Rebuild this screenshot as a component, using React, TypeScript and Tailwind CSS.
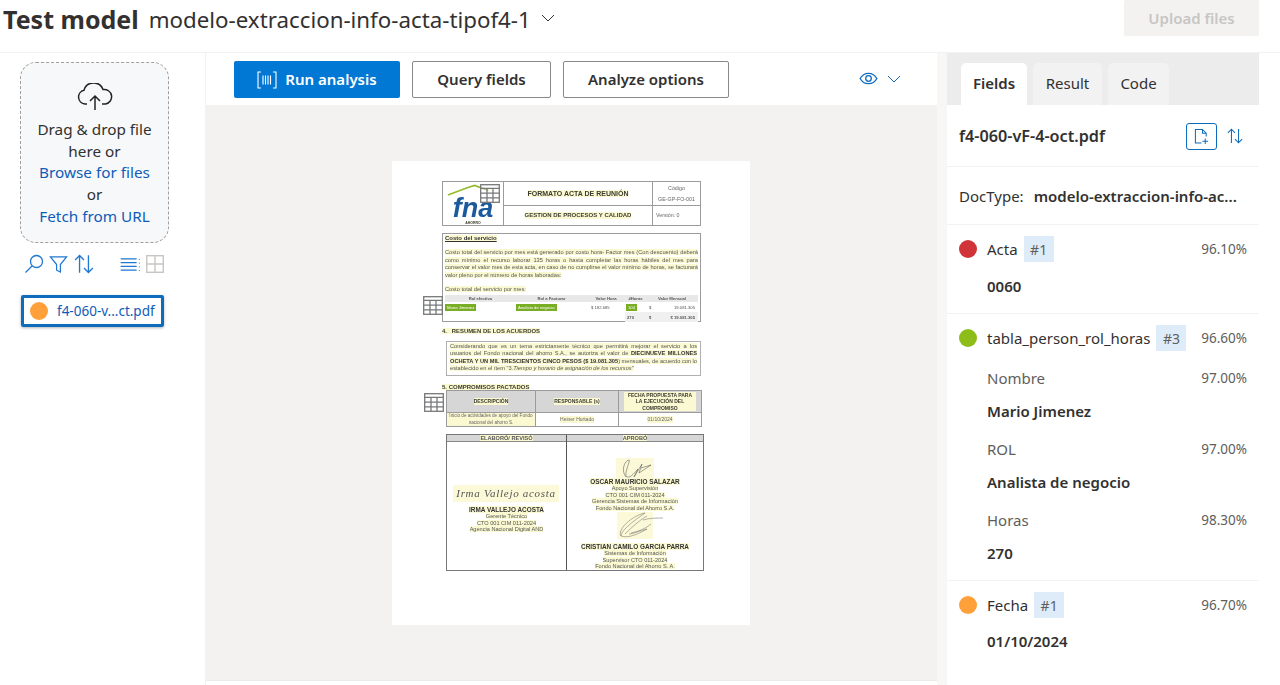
import React from "react";

const Dot = ({ c }: { c: string }) => <span className={`w-[18px] h-[18px] rounded-full shrink-0 ${c}`} />;

const Sort = ({ className = "" }: { className?: string }) => (
  <svg viewBox="0 0 18 18" className={className} fill="none" stroke="currentColor" strokeWidth="1.2">
    <path d="M5 16.8V1.4M1 5.4l4-4 4 4M13 1.2v15.4M9 12.6l4 4 4-4" />
  </svg>
);

const TableIcon = ({ className = "" }: { className?: string }) => (
  <svg viewBox="0 0 20 19" className={className} fill="#fff" fillOpacity="0.35" stroke="#77787a" strokeWidth="1.3">
    <rect x="0.7" y="0.7" width="18.6" height="17.6" />
    <path d="M0.7 4.4h18.6M0.7 9.2h18.6M0.7 13.9h18.6M7 4.4v13.9M13 4.4v13.9" />
  </svg>
);

const H = ({ children }: { children: React.ReactNode }) => <span className="bg-[#fbf9d2]">{children}</span>;

function Doc() {
  return (
    <div className="w-[358px] h-[464px] bg-white relative pl-[50px] pt-[20px] text-[#3b3b30] shrink-0 font-['Liberation_Sans',sans-serif] blur-[0.25px]">
      <div className="w-[259px] h-[45px] border border-[#9b9b9b] flex text-[6px] leading-[7px]">
        <div className="w-[61px] border-r border-[#9b9b9b] relative flex flex-col items-center justify-end">
          <svg viewBox="0 0 50 14" className="absolute left-[4px] top-[2px] w-[46px] h-[13px]" fill="none">
            <path d="M1 12 L22 4 L30 1.5 L45 7" stroke="#94bb2c" strokeWidth="1.8" />
          </svg>
          <span className="text-[#1c5a9e] text-[27px] leading-[25px] font-bold italic">fna</span>
          <span className="text-[3.5px] leading-[4px] font-bold">AHORRO</span>
        </div>
        <div className="w-[149px] border-r border-[#9b9b9b] flex flex-col font-bold">
          <div className="h-[24px] border-b border-[#9b9b9b] flex items-center justify-center text-[7px]"><H>FORMATO ACTA DE REUNIÓN</H></div>
          <div className="flex-1 flex items-center justify-center"><H>GESTION DE PROCESOS Y CALIDAD</H></div>
        </div>
        <div className="flex-1 flex flex-col text-[#666] text-[5.3px] pl-[3px]">
          <div className="h-[24px] border-b border-[#9b9b9b] -ml-[3px] flex flex-col items-center justify-center leading-[11px]"><span>Código</span><span>GE-GP-FO-001</span></div>
          <div className="flex-1 flex items-center">Versión: 0</div>
        </div>
      </div>

      <div className="mt-[7px] w-[259px] h-[89px] border border-[#9b9b9b] px-[2px] text-[#555] text-[5.7px] leading-[7.5px]">
        <div className="font-bold underline text-[6px] leading-[6px] text-[#333] mt-[1px] mb-[8px]"><H>Costo del servicio</H></div>
        <p className="text-justify"><H>Costo total del servicio por mes está generado por costo hora- Factor mes (Con descuento) deberá como mínimo el recurso laborar 135 horas o hasta completar las horas hábiles del mes para conservar el valor mes de esta acta, en caso de no cumplirse el valor mínimo de horas, se facturará valor pleno por el número de horas laboradas:</H></p>
        <div className="mt-[7px] mb-[3px] leading-[6px]"><H>Costo total del servicio por mes:</H></div>
        <div className="grid grid-cols-[71px_71px_38px_21px_52px] text-[4.2px] leading-[7px]">
          <div className="bg-[#e8e8e8] text-center font-bold">Rol efectivo</div>
          <div className="bg-[#e8e8e8] text-center font-bold">Rol a Facturar</div>
          <div className="bg-[#e8e8e8] text-center font-bold">Valor Hora</div>
          <div className="bg-[#e8e8e8] text-center font-bold">#Horas</div>
          <div className="bg-[#e8e8e8] text-center font-bold">Valor Mensual</div>
          <div className="h-[10px] flex items-center"><span className="bg-[#78ad24] text-white px-[2px] leading-[7px]">Mario Jimenez</span></div>
          <div className="h-[10px] flex items-center"><span className="bg-[#78ad24] text-white px-[2px] leading-[7px]">Analista de negocio</span></div>
          <div className="h-[10px] flex items-center pl-[4px]">$ 182.685</div>
          <div className="h-[10px] flex items-center pl-[1px]"><span className="bg-[#78ad24] text-white px-[2px] leading-[7px]">104</span></div>
          <div className="h-[10px] flex items-center justify-between px-[3px]"><span>$</span><span>19.081.305</span></div>
          <div className="col-span-3 h-[10px]" />
          <div className="h-[10px] bg-[#f0f0f0] flex items-center pl-[2px] font-bold">270</div>
          <div className="h-[10px] bg-[#f0f0f0] flex items-center justify-between px-[3px] font-bold"><span>$</span><span>$ 19.081.305</span></div>
        </div>
      </div>

      <div className="mt-[6px] text-[5.9px] leading-[6px] font-bold"><H>4.&nbsp;&nbsp;&nbsp;RESUMEN DE LOS ACUERDOS</H></div>
      <div className="ml-[4px] mt-[7px] w-[255px] h-[35px] border border-[#b0b0b0] px-[3px] pt-[1px] text-[5.65px] leading-[7.4px] text-[#555] text-justify">
        <H>Considerando que es un tema estrictamente técnico que permitirá mejorar el servicio a los usuarios del Fondo nacional del ahorro S.A., se autoriza el valor de <b className="text-[#333]">DIECINUEVE MILLONES OCHETA Y UN MIL TRESCIENTOS CINCO PESOS ($ 19.081.305</b>) mensuales, de acuerdo con lo establecido en el ítem "3.<i>Tiempo y horario de asignación de los recursos</i>"</H>
      </div>

      <div className="mt-[8px] text-[6px] leading-[6px] font-bold"><H>5.&nbsp;COMPROMISOS PACTADOS</H></div>
      <div className="ml-[4px] w-[256px] h-[37px] border border-[#9b9b9b] grid grid-cols-[89px_83px_1fr] grid-rows-[22px_1fr] text-[5px] leading-[6.5px] text-center">
        <div className="bg-[#d6d6d6] border-r border-b border-[#9b9b9b] flex items-center justify-center font-bold"><H>DESCRIPCIÓN</H></div>
        <div className="bg-[#d6d6d6] border-r border-b border-[#9b9b9b] flex items-center justify-center font-bold"><H>RESPONSABLE (s)</H></div>
        <div className="bg-[#d6d6d6] border-b border-[#9b9b9b] flex items-center justify-center font-bold px-[5px]"><H>FECHA PROPUESTA PARA LA EJECUCIÓN DEL COMPROMISO</H></div>
        <div className="border-r border-[#9b9b9b] flex items-center justify-center text-[#666] text-[4.6px]"><H>Inicio de actividades de apoyo del Fondo nacional del ahorro S.</H></div>
        <div className="border-r border-[#9b9b9b] flex items-center justify-center text-[#666]"><H>Heiner Hurtado</H></div>
        <div className="flex items-center justify-center text-[#666]"><H>01/10/2024</H></div>
      </div>

      <div className="ml-[4px] mt-[7px] w-[258px] h-[137px] border border-[#777] flex text-[5.6px] leading-[6.7px] text-center text-[#555]">
        <div className="w-[120px] border-r border-[#555] flex flex-col">
          <div className="h-[7px] bg-[#d6d6d6] border-b border-[#888] font-bold leading-[6px]"><H>ELABORÓ/ REVISÓ</H></div>
          <div className="mt-[43px] w-[106px] h-[17px] ml-[6px] bg-[#fbf9d8] text-[11px] leading-[17px] italic font-['Liberation_Serif',serif] tracking-[0.7px] whitespace-nowrap overflow-hidden">Irma Vallejo acosta</div>
          <div className="mt-[4px] text-[6.4px] leading-[7px] font-bold text-[#333]"><H>IRMA VALLEJO ACOSTA</H></div>
          <div><H>Gerente Técnico</H></div>
          <div><H>CTO 001 CIM 011-2024</H></div>
          <div><H>Agencia Nacional Digital AND</H></div>
        </div>
        <div className="flex-1 flex flex-col items-center">
          <div className="h-[7px] w-full bg-[#d6d6d6] border-b border-[#888] font-bold leading-[6px]"><H>APROBÓ</H></div>
          <svg viewBox="0 0 38 20" className="w-[38px] h-[20px] mt-[16px] bg-[#fbf9d8] shrink-0" fill="none" stroke="#444" strokeWidth="0.5">
            <path d="M10 19C5 13 8 3 13 2c2 0-6 15-2 17 4 1 8-5 11-8l-4 8 8-13-3 9 12-8-10 3" />
          </svg>
          <div className="text-[6.4px] leading-[7px] font-bold text-[#333] whitespace-nowrap"><H>OSCAR MAURICIO SALAZAR</H></div>
          <div><H>Apoyo Supervisión</H></div>
          <div><H>CTO 001 CIM 011-2024</H></div>
          <div><H>Gerencia Sistemas de Información</H></div>
          <div><H>Fondo Nacional del Ahorro S.A.</H></div>
          <svg viewBox="0 0 50 27" className="w-[50px] h-[27px] shrink-0 ml-[6px]" fill="none" stroke="#555" strokeWidth="0.45">
            <rect x="4" width="36" height="27" fill="#fbf9d8" stroke="none" />
            <path d="M8 24C4 18 18 4 32 1 22 8 8 18 8 24c6 2 14 0 26-7-8 2-14 5-18 5M12 22c10-10 18-16 22-18M18 21c8-2 14-4 20-9M30 8c6-2 14-2 20-2" />
          </svg>
          <div className="text-[6.4px] leading-[7px] font-bold text-[#333] mt-[4px] whitespace-nowrap"><H>CRISTIAN CAMILO GARCIA PARRA</H></div>
          <div><H>Sistemas de Información</H></div>
          <div><H>Supervisor CTO 011-2024</H></div>
          <div><H>Fondo Nacional del Ahorro S. A.</H></div>
        </div>
      </div>

      <TableIcon className="absolute left-[88px] top-[23px] w-[20px] h-[19px]" />
      <TableIcon className="absolute left-[31px] top-[135px] w-[20px] h-[19px]" />
      <TableIcon className="absolute left-[32px] top-[232px] w-[20px] h-[19px]" />
    </div>
  );
}

const Section = ({ children, border = true }: { children: React.ReactNode; border?: boolean }) => (
  <div className={border ? "border-b border-[#f3f2f1]" : ""}>{children}</div>
);

const FieldHead = ({ dot, name, tag, pct }: { dot: string; name: string; tag: string; pct: string }) => (
  <div className="flex items-center h-[26px]">
    <Dot c={dot} />
    <span className="ml-[10px] text-[#323130]">{name}</span>
    <span className="ml-[6px] w-[30px] h-[26px] bg-[#deecf9] text-[#605e5c] text-[14px] flex items-center justify-center">{tag}</span>
    <span className="ml-auto text-[13.5px] text-[#605e5c]">{pct}</span>
  </div>
);

const SubField = ({ name, pct, value }: { name: string; pct: string; value: string }) => (
  <div className="pl-[28px] h-[71px]">
    <div className="flex items-center justify-between h-[24px] text-[#605e5c]">
      <span>{name}</span>
      <span className="text-[13.5px]">{pct}</span>
    </div>
    <div className="mt-[9px] font-semibold text-[#323130] leading-[24px]">{value}</div>
  </div>
);

export default function App() {
  return (
    <div className="w-[1280px] h-[685px] overflow-hidden bg-white flex flex-col font-['Noto_Sans',sans-serif] text-[#323130] text-[15px]">
      <header className="h-[53px] shrink-0 flex items-start border-b border-[#f3f2f1] pr-[21px]">
        <h1 className="ml-[3px] mt-[2px] text-[25px] leading-[34px] font-bold text-[#323130]">Test model</h1>
        <div className="ml-[10px] mt-[4px] text-[22.3px] leading-[32px] text-[#323130] whitespace-nowrap">modelo-extraccion-info-acta-tipof4-1</div>
        <svg viewBox="0 0 14 8" className="ml-[10px] mt-[14px] w-[14px] h-[8px]" fill="none" stroke="#323130" strokeWidth="1">
          <path d="M1 1l6 6 6-6" />
        </svg>
        <div className="ml-auto w-[135px] h-[36px] bg-[#f3f2f1] rounded-[2px] flex items-center justify-center text-[#c8c6c4] font-semibold text-[15px]">Upload files</div>
      </header>

      <div className="flex-1 flex min-h-0">
        <aside className="w-[206px] shrink-0 border-r border-[#f3f2f1] pl-[20px] pt-[9px]">
          <div className="w-[149px] h-[181px] rounded-[16px] border border-dashed border-[#a19f9d] bg-[#f7f8fa] flex flex-col items-center pt-[20px] text-[15.3px] leading-[21.7px]">
            <svg viewBox="0 0 38 28" className="w-[38px] h-[28px] mb-[8px] shrink-0" fill="none" stroke="#252423" strokeWidth="1.5">
              <path d="M11 21H9a7 7 0 0 1-1-13.8A10 10 0 0 1 27 6.5 7.3 7.3 0 0 1 29.5 21H26" />
              <path d="M19 27V13M14 18l5-5 5 5" />
            </svg>
            <span>Drag &amp; drop file</span>
            <span>here or</span>
            <span className="text-[#0f5cb8]">Browse for files</span>
            <span>or</span>
            <span className="text-[#0f5cb8]">Fetch from URL</span>
          </div>
          <div className="flex items-center h-[20px] mt-[11px] w-[149px] text-[#1f78d1] pl-[4px]">
            <svg viewBox="0 0 20 20" className="w-[20px] h-[20px]" fill="none" stroke="currentColor" strokeWidth="1.3"><circle cx="12.5" cy="7.5" r="6" /><path d="M8 12L1.5 18.5" /></svg>
            <svg viewBox="0 0 20 20" className="w-[19px] h-[19px] ml-[5px]" fill="none" stroke="currentColor" strokeWidth="1.3"><path d="M1.5 2h17l-6.5 8v8l-4-2v-6z" /></svg>
            <Sort className="w-[20px] h-[20px] ml-[6px]" />
            <svg viewBox="0 0 22 16" className="w-[21px] h-[15px] ml-[26px]" fill="none" stroke="currentColor" strokeWidth="1.2"><path d="M0.5 2h17M0.5 6h17M0.5 10h17M0.5 14h17M20.5 2v1M20.5 6v1M20.5 10v1M20.5 14v1" /></svg>
            <svg viewBox="0 0 18 18" className="w-[18px] h-[18px] ml-[5px]" fill="none" stroke="#c8c6c4" strokeWidth="1.4"><rect x="0.7" y="0.7" width="16.6" height="16.6" /><path d="M9 0.7v16.6M0.7 9h16.6" /></svg>
          </div>
          <div className="mt-[21px] w-[143px] h-[32px] ml-[1px] border-[3px] border-[#0f6cbd] rounded-[2px] shadow-[0_1px_3px_rgba(0,0,0,0.3)] flex items-center pl-[6px] text-[#0f5cb8] text-[13.5px]">
            <Dot c="bg-[#ffa03a]" />
            <span className="ml-[9px] whitespace-nowrap">f4-060-v...ct.pdf</span>
          </div>
        </aside>

        <main className="w-[731px] shrink-0 flex flex-col">
          <div className="h-[52px] shrink-0 flex items-start pl-[28px] pt-[8px] pr-[36px]">
            <button className="w-[166px] h-[37px] bg-[#0078d4] rounded-[2px] text-white font-semibold text-[15px] flex items-center justify-center gap-[8px]">
              <svg viewBox="0 0 20 18" className="w-[20px] h-[18px]" fill="none" stroke="#fff" strokeWidth="1.1">
                <path d="M4 1H1v16h3M16 1h3v16h-3M6 4.5v9M8.5 4.5v9M11 4.5v9M13.5 4.5v9" />
              </svg>
              Run analysis
            </button>
            <button className="ml-[12px] w-[139px] h-[37px] border border-[#8a8886] rounded-[2px] font-semibold text-[15px] text-[#323130]">Query fields</button>
            <button className="ml-[12px] w-[166px] h-[37px] border border-[#8a8886] rounded-[2px] font-semibold text-[15px] text-[#323130]">Analyze options</button>
            <svg viewBox="0 0 20 14" className="ml-auto mt-[11px] w-[19px] h-[13px]" fill="none" stroke="#0f6cbd" strokeWidth="1.4"><path d="M1 7c4-7.5 14-7.5 18 0-4 7.5-14 7.5-18 0z" /><circle cx="10" cy="7" r="3" /></svg>
            <svg viewBox="0 0 14 8" className="ml-[9px] mt-[14px] w-[14px] h-[8px]" fill="none" stroke="#0f6cbd" strokeWidth="1"><path d="M1 1l6 6 6-6" /></svg>
          </div>
          <div className="h-[576px] shrink-0 bg-[#f3f2f1] border-b border-[#edebe9] flex justify-center pt-[56px] pr-[1px]">
            <Doc />
          </div>
        </main>

        <div className="w-[10px] shrink-0 bg-[#f8f7f6]" />

        <section className="w-[312px] shrink-0 flex flex-col min-h-0">
          <div className="h-[52px] shrink-0 bg-[#ececec] flex items-end pl-[14px] gap-[6px]">
            <div className="w-[66px] h-[42px] pb-[2px] rounded-t-[5px] bg-white flex items-center justify-center font-semibold text-[#323130]">Fields</div>
            <div className="w-[69px] h-[42px] pb-[2px] rounded-t-[5px] bg-[#f2f2f2] flex items-center justify-center text-[#323130]">Result</div>
            <div className="w-[61px] h-[42px] pb-[2px] rounded-t-[5px] bg-[#f2f2f2] flex items-center justify-center text-[#323130]">Code</div>
          </div>
          <Section>
            <div className="h-[61px] pt-[1px] flex items-center pl-[12px] pr-[16px]">
              <span className="font-semibold text-[16.2px]">f4-060-vF-4-oct.pdf</span>
              <div className="ml-auto w-[31px] h-[27px] border border-[#0f6cbd] rounded-[3px] flex items-center justify-center text-[#0f6cbd]">
                <svg viewBox="0 0 16 18" className="w-[15px] h-[17px]" fill="none" stroke="currentColor" strokeWidth="1.1"><path d="M8 16H1.5V1.5H9L13 5.5V9M9 1.5v4h4M12 11v6M9 14h6" /></svg>
              </div>
              <Sort className="ml-[10px] w-[16px] h-[16px] text-[#0f6cbd]" />
            </div>
          </Section>
          <Section>
            <div className="h-[57px] pt-[1px] flex items-center pl-[12px] whitespace-nowrap">
              <span>DocType:</span>
              <span className="ml-[10px] font-semibold">modelo-extraccion-info-ac...</span>
            </div>
          </Section>
          <Section>
            <div className="h-[88px] pl-[12px] pr-[12px] pt-[11px]">
              <FieldHead dot="bg-[#d13438]" name="Acta" tag="#1" pct="96.10%" />
              <div className="pl-[28px] mt-[12px] font-semibold leading-[24px]">0060</div>
            </div>
          </Section>
          <Section>
            <div className="h-[266px] pl-[12px] pr-[12px] pt-[11px]">
              <FieldHead dot="bg-[#8cbd18]" name="tabla_person_rol_horas" tag="#3" pct="96.60%" />
              <div className="mt-[15px]">
                <SubField name="Nombre" pct="97.00%" value="Mario Jimenez" />
                <SubField name="ROL" pct="97.00%" value="Analista de negocio" />
                <SubField name="Horas" pct="98.30%" value="270" />
              </div>
            </div>
          </Section>
          <Section border={false}>
            <div className="pl-[12px] pr-[12px] pt-[11px]">
              <FieldHead dot="bg-[#ffa03a]" name="Fecha" tag="#1" pct="96.70%" />
              <div className="pl-[28px] mt-[11px] font-semibold leading-[24px]">01/10/2024</div>
            </div>
          </Section>
        </section>
      </div>
    </div>
  );
}
